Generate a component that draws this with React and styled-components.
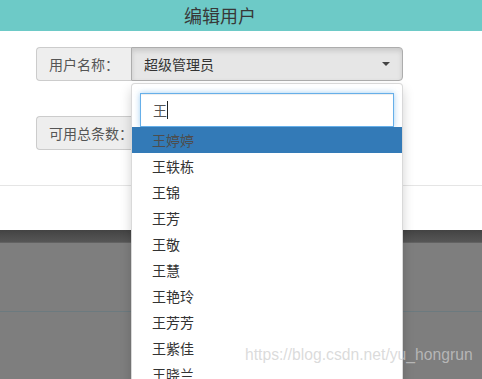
import React from "react";
import styled, { createGlobalStyle } from "styled-components";

const Global = createGlobalStyle`
  html, body { margin: 0; padding: 0; }
  body {
    width: 482px; height: 379px; overflow: hidden; background: #7f7f7f;
    font-family: "Noto Sans CJK SC", "Noto Sans", sans-serif;
  }
`;

const Page = styled.div`
  position: relative;
  width: 482px;
  height: 379px;
  overflow: hidden;
  background: #7e7e7e;
`;

const Modal = styled.div`
  background: #fff;
  display: flex;
  flex-direction: column;
`;

const Header = styled.div`
  height: 31px;
  background: #6dcac7;
  display: flex;
  align-items: center;
  padding: 0 0 2px 184px;
  box-sizing: border-box;
  font-size: 18px;
  color: #383838;
  line-height: 1;
`;

const Body = styled.div`
  display: flex;
  flex-direction: column;
  gap: 35px;
  padding: 16px 36px 35px;
`;

const Footer = styled.div`
  height: 44px;
  border-top: 1px solid #e5e5e5;
`;

const Group = styled.div`
  display: flex;
  height: 34px;
`;

const Addon = styled.div`
  display: flex;
  align-items: center;
  padding: 0 12px;
  background: #eee;
  border: 1px solid #ccc;
  border-right: 0;
  border-radius: 4px 0 0 4px;
  font-size: 14px;
  color: #555;
  white-space: nowrap;
  box-sizing: border-box;
`;

const SelectBtn = styled.div`
  width: 272px;
  display: flex;
  align-items: center;
  justify-content: space-between;
  padding: 0 12px;
  box-sizing: border-box;
  background: #e6e6e6;
  border: 1px solid #adadad;
  border-radius: 0 4px 4px 0;
  box-shadow: inset 0 3px 5px rgba(0, 0, 0, 0.125);
  font-size: 14px;
  color: #333;
`;

const Caret = styled.span`
  width: 0;
  height: 0;
  border-top: 4px solid #444;
  border-left: 4px solid transparent;
  border-right: 4px solid transparent;
  margin-right: 0;
`;

const Backdrop = styled.div`
  display: flex;
  flex-direction: column;
`;

const ShadowBand = styled.div`
  height: 12px;
  background: linear-gradient(#434343, #565656);
  border-bottom: 1px solid #626262;
`;

const GrayBlock = styled.div`
  height: ${(p) => p.$h}px;
  background: #7e7e7e;
  border-bottom: ${(p) => (p.$line ? "1px solid #6c7a7f" : "0")};
`;

const Dropdown = styled.div`
  position: absolute;
  left: 131px;
  top: 83px;
  width: 272px;
  height: 320px;
  box-sizing: border-box;
  background: #fff;
  border: 1px solid rgba(0, 0, 0, 0.15);
  border-radius: 4px;
  box-shadow: 0 6px 12px rgba(0, 0, 0, 0.175);
  padding-top: 5px;
`;

const SearchBox = styled.div`
  padding: 4px 8px 0;
`;

const SearchInput = styled.div`
  height: 34px;
  box-sizing: border-box;
  border: 1px solid #66afe9;
  box-shadow: inset 0 1px 1px rgba(0, 0, 0, 0.075), 0 0 6px rgba(102, 175, 233, 0.6);
  display: flex;
  align-items: center;
  padding: 0 12px;
  font-size: 14px;
  color: #555;
`;

const TextCaret = styled.span`
  display: inline-block;
  width: 1px;
  height: 18px;
  background: #222;
`;

const List = styled.ul`
  list-style: none;
  margin: 0;
  padding: 0;
`;

const Item = styled.li`
  height: 26px;
  display: flex;
  align-items: center;
  padding: 0 20px;
  font-size: 14px;
  color: ${(p) => (p.$active ? "#4d4d4d" : "#333")};
  background: ${(p) => (p.$active ? "#337ab7" : "transparent")};
`;

const Watermark = styled.div`
  position: absolute;
  left: 245px;
  top: 346px;
  font-family: "Liberation Sans", Arial, sans-serif;
  font-size: 15.7px;
  color: rgba(205, 205, 205, 0.72);
  white-space: nowrap;
`;

const names = ["王婷婷", "王轶栋", "王锦", "王芳", "王敬", "王慧", "王艳玲", "王芳芳", "王紫佳", "王晓兰"];

export default function App() {
  return (
    <Page>
      <Global />
      <Modal>
        <Header>编辑用户</Header>
        <Body>
          <Group>
            <Addon>用户名称：</Addon>
            <SelectBtn>
              <span>超级管理员</span>
              <Caret />
            </SelectBtn>
          </Group>
          <Group>
            <Addon>可用总条数：</Addon>
          </Group>
        </Body>
        <Footer />
      </Modal>
      <Backdrop>
        <ShadowBand />
        <GrayBlock $h={68} $line />
        <GrayBlock $h={80} />
      </Backdrop>
      <Dropdown>
        <SearchBox>
          <SearchInput>
            王<TextCaret />
          </SearchInput>
        </SearchBox>
        <List>
          {names.map((n, i) => (
            <Item key={n} $active={i === 0}>
              {n}
            </Item>
          ))}
        </List>
      </Dropdown>
      <Watermark>https://blog.csdn.net/yu_hongrun</Watermark>
    </Page>
  );
}
